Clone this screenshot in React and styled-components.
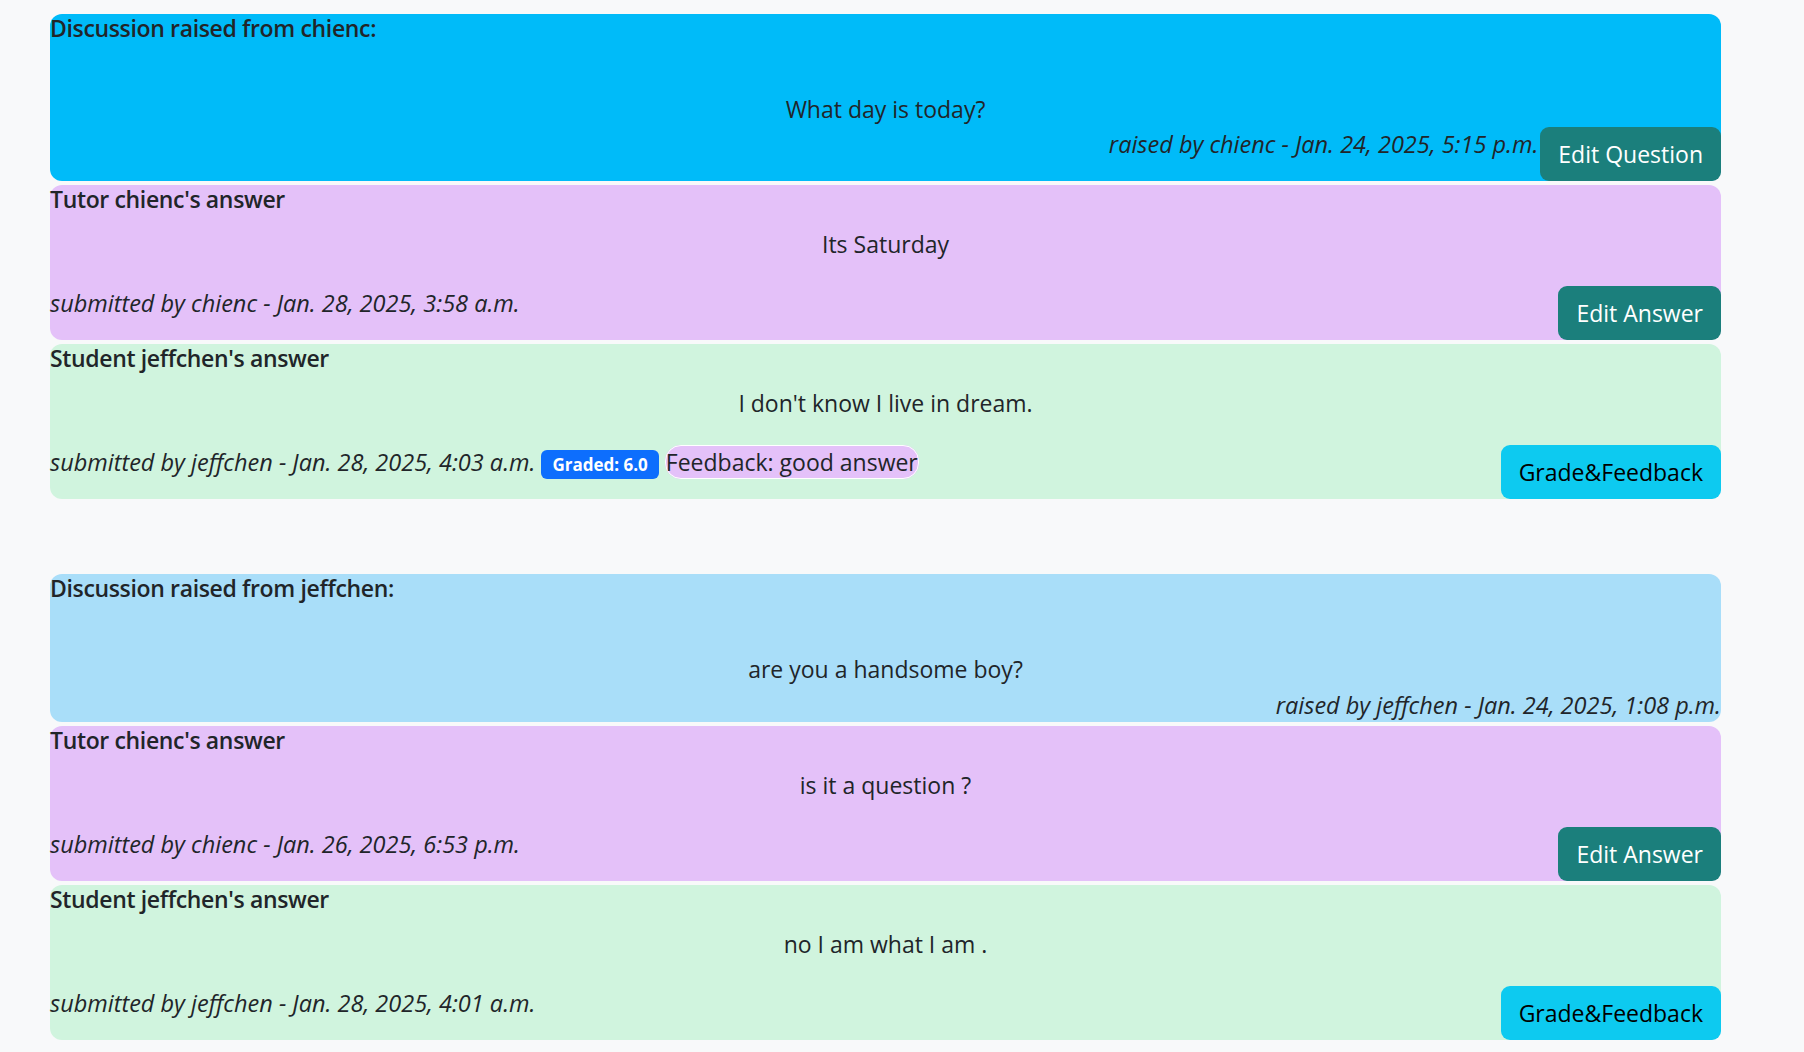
import styled, { createGlobalStyle } from "styled-components";

const GlobalStyle = createGlobalStyle`
  body {
    margin: 0;
    background-color: #f8f9fa;
    color: #212529;
    font-family: "Open Sans", "Noto Sans", sans-serif;
    font-size: 23px;
    line-height: 36px;
  }
`;

const Pagina = styled.div`
  padding: 14px 83px 20px 50px;
  display: flex;
  flex-direction: column;
  gap: 75px;
`;

const Discussao = styled.section`
  display: flex;
  flex-direction: column;
  gap: 4px;
`;

const Cartao = styled.div`
  background-color: ${(p) => p.$cor};
  border-radius: 12px;
  display: flex;
  flex-direction: column;
`;

const Titulo = styled.div`
  font-weight: 600;
  letter-spacing: -0.35px;
  line-height: 28px;
  padding-bottom: 8px;
`;

const Pergunta = styled.p`
  margin: 41px 0 0 0;
  text-align: center;
`;

const Resposta = styled.p`
  margin: 5px 0 24px 0;
  text-align: center;
`;

const RodapePergunta = styled.div`
  display: flex;
  justify-content: flex-end;
  align-items: flex-start;
  gap: 2px;
`;

const RodapeResposta = styled.div`
  display: flex;
  justify-content: space-between;
  align-items: flex-start;
`;

const Autoria = styled.span`
  font-style: italic;
  font-size: 23.5px;
  line-height: 34px;
  padding-top: ${(p) => (p.$curta ? "1px" : "0")};
`;

const LinhaInfo = styled.div`
  line-height: 34px;
`;

const Nota = styled.span`
  display: inline-block;
  background-color: #0d6efd;
  color: #fff;
  font-size: 17px;
  font-weight: 700;
  line-height: 1;
  padding: 6px 11px;
  border-radius: 6px;
  vertical-align: baseline;
`;

const Comentario = styled.span`
  background-color: #e4c1f9;
  border: 1px solid #fff;
  border-radius: 16px;
`;

const Botao = styled.button`
  font-family: "Open Sans", "Noto Sans", sans-serif;
  font-size: 23px;
  line-height: 36px;
  padding: 9px 18px;
  border: none;
  border-radius: 9px;
  cursor: pointer;
  flex-shrink: 0;
  background-color: ${(p) => (p.$tipo === "nota" ? "#0dcaf0" : "#1b7f7c")};
  color: ${(p) => (p.$tipo === "nota" ? "#000" : "#fff")};
`;

const discussoes = [
  {
    autor: "chienc",
    cor: "#00bbf9",
    pergunta: "What day is today?",
    data: "Jan. 24, 2025, 5:15 p.m.",
    podeEditar: true,
    tutor: { texto: "Its Saturday", data: "Jan. 28, 2025, 3:58 a.m." },
    aluno: {
      texto: "I don't know I live in dream.",
      data: "Jan. 28, 2025, 4:03 a.m.",
      nota: "6.0",
      feedback: "good answer",
    },
  },
  {
    autor: "jeffchen",
    cor: "#a9def9",
    pergunta: "are you a handsome boy?",
    data: "Jan. 24, 2025, 1:08 p.m.",
    podeEditar: false,
    tutor: { texto: "is it a question ?", data: "Jan. 26, 2025, 6:53 p.m." },
    aluno: { texto: "no I am what I am .", data: "Jan. 28, 2025, 4:01 a.m." },
  },
];

export default function App() {
  return (
    <>
      <GlobalStyle />
      <Pagina>
        {discussoes.map((d) => (
          <Discussao key={d.autor}>
            <Cartao $cor={d.cor}>
              <Titulo>Discussion raised from {d.autor}:</Titulo>
              <Pergunta>{d.pergunta}</Pergunta>
              <RodapePergunta>
                <Autoria $curta={!d.podeEditar}>
                  raised by {d.autor} - {d.data}
                </Autoria>
                {d.podeEditar && <Botao>Edit Question</Botao>}
              </RodapePergunta>
            </Cartao>

            <Cartao $cor="#e4c1f9">
              <Titulo>Tutor chienc's answer</Titulo>
              <Resposta>{d.tutor.texto}</Resposta>
              <RodapeResposta>
                <Autoria>submitted by chienc - {d.tutor.data}</Autoria>
                <Botao>Edit Answer</Botao>
              </RodapeResposta>
            </Cartao>

            <Cartao $cor="#d0f4de">
              <Titulo>Student jeffchen's answer</Titulo>
              <Resposta>{d.aluno.texto}</Resposta>
              <RodapeResposta>
                <LinhaInfo>
                  <Autoria as="i">submitted by jeffchen - {d.aluno.data}</Autoria>
                  {d.aluno.nota && (
                    <>
                      {" "}
                      <Nota>Graded: {d.aluno.nota}</Nota>{" "}
                      <Comentario>Feedback: {d.aluno.feedback}</Comentario>
                    </>
                  )}
                </LinhaInfo>
                <Botao $tipo="nota">Grade&amp;Feedback</Botao>
              </RodapeResposta>
            </Cartao>
          </Discussao>
        ))}
      </Pagina>
    </>
  );
}
